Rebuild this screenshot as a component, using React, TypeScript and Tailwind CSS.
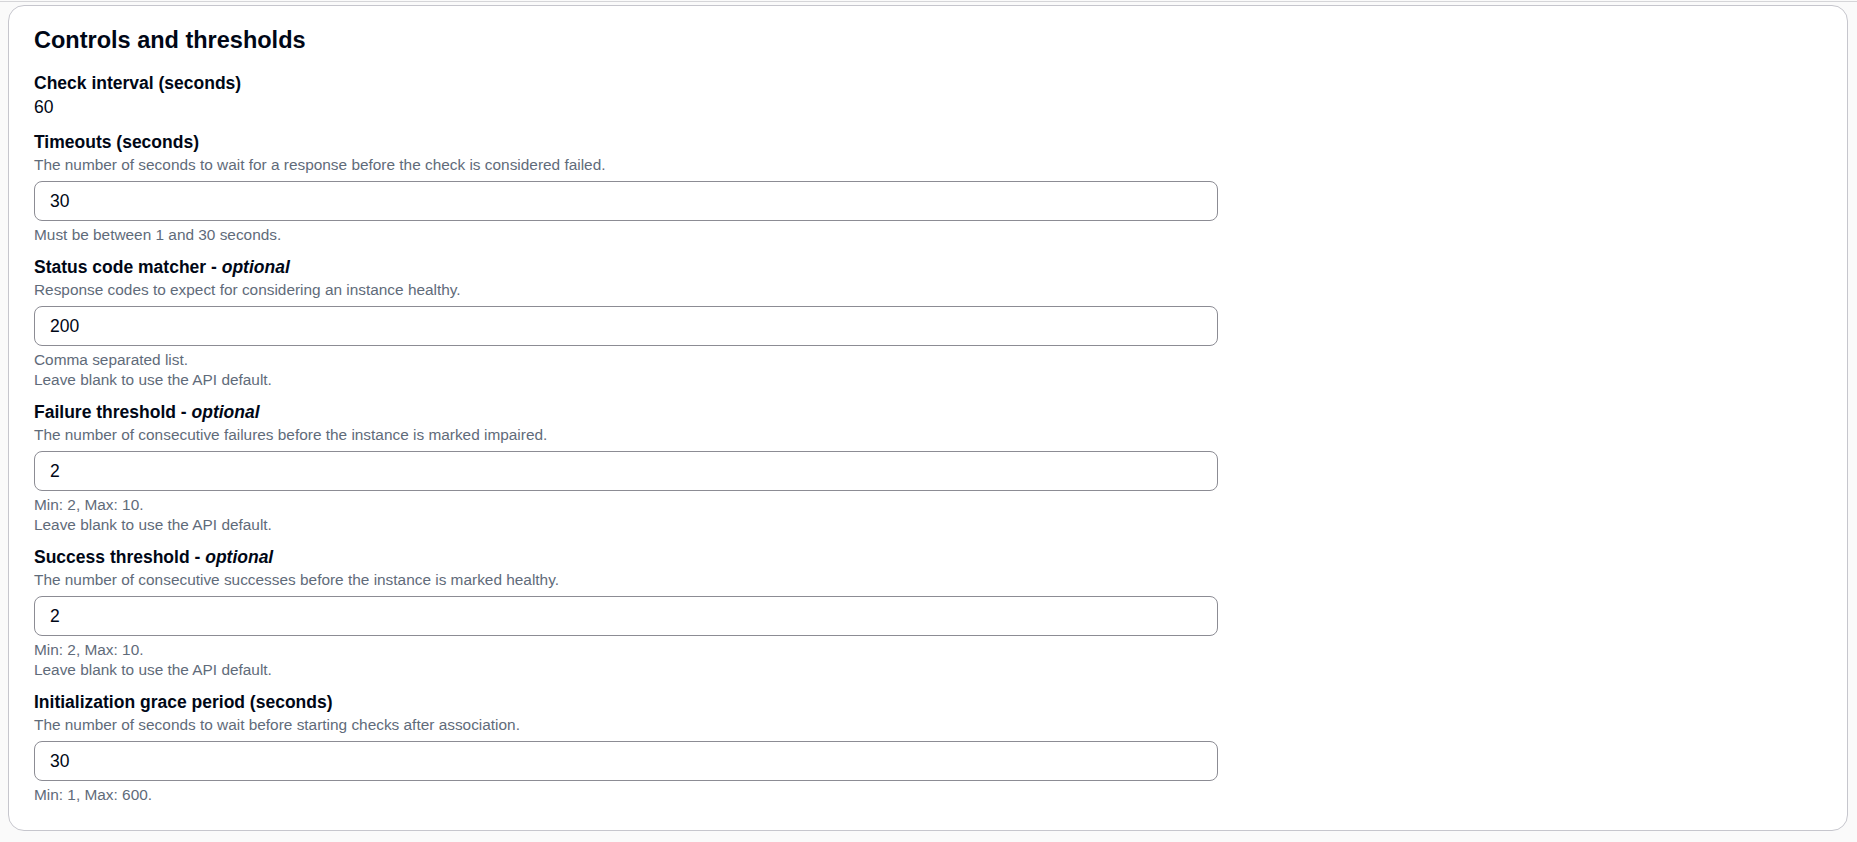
import React from "react";

type FieldProps = {
  label: string;
  optional?: boolean;
  description: string;
  value: string;
  constraints: string[];
};

function Field({ label, optional, description, value, constraints }: FieldProps) {
  return (
    <div className="flex flex-col">
      <span className="text-[17.5px] leading-[24px] font-bold text-[#000716]">
        {label}
        {optional && (
          <>
            {" - "}
            <i>optional</i>
          </>
        )}
      </span>
      <span className="mt-px text-[15.4px] leading-[20px] text-[#5f6b7a]">{description}</span>
      <input
        type="text"
        defaultValue={value}
        className="mt-[6px] h-[40px] w-[1184px] rounded-[8px] border border-[#8c8c94] bg-white px-[15px] text-[17.5px] text-[#000716] outline-none"
      />
      <div className="mt-1 flex flex-col text-[15.4px] leading-[20px] text-[#5f6b7a]">
        {constraints.map((c) => (
          <span key={c}>{c}</span>
        ))}
      </div>
    </div>
  );
}

export default function App() {
  return (
    <div className="min-h-[842px] bg-[#fafafa] pt-px font-['Liberation_Sans',Arial,sans-serif]">
      <div className="h-px bg-[#d5d5d8]" />
      <section className="mt-[3px] ml-[8px] mr-[9px] rounded-[16px] border border-[#c6c6cd] bg-white pt-[20px] pb-[25px] pl-[25px]">
        <div className="flex flex-col gap-[10px]">
          <h2 className="mb-[7px] text-[23.5px] leading-[28px] font-bold text-[#000716]">
            Controls and thresholds
          </h2>

          <div className="mb-px flex flex-col">
            <span className="text-[17.5px] leading-[24px] font-bold text-[#000716]">
              Check interval (seconds)
            </span>
            <span className="text-[17.5px] leading-[24px] text-[#000716]">60</span>
          </div>

          <Field
            label="Timeouts (seconds)"
            description="The number of seconds to wait for a response before the check is considered failed."
            value="30"
            constraints={["Must be between 1 and 30 seconds."]}
          />
          <Field
            label="Status code matcher"
            optional
            description="Response codes to expect for considering an instance healthy."
            value="200"
            constraints={["Comma separated list.", "Leave blank to use the API default."]}
          />
          <Field
            label="Failure threshold"
            optional
            description="The number of consecutive failures before the instance is marked impaired."
            value="2"
            constraints={["Min: 2, Max: 10.", "Leave blank to use the API default."]}
          />
          <Field
            label="Success threshold"
            optional
            description="The number of consecutive successes before the instance is marked healthy."
            value="2"
            constraints={["Min: 2, Max: 10.", "Leave blank to use the API default."]}
          />
          <Field
            label="Initialization grace period (seconds)"
            description="The number of seconds to wait before starting checks after association."
            value="30"
            constraints={["Min: 1, Max: 600."]}
          />
        </div>
      </section>
    </div>
  );
}
